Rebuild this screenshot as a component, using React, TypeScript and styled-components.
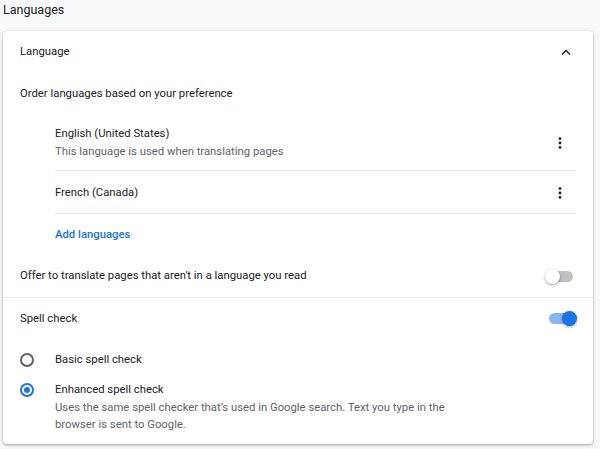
import styled, { createGlobalStyle } from "styled-components";

const GlobalStyle = createGlobalStyle`
  *, *::before, *::after {
    box-sizing: border-box;
  }
  html, body {
    margin: 0;
    padding: 0;
    background: #f8f9fa;
    font-family: Roboto, "Liberation Sans", sans-serif;
    color: #202124;
  }
`;

const Page = styled.div`
  width: 600px;
  height: 449px;
  padding: 0 7px 0 3px;
  overflow: hidden;
`;

const Title = styled.h2`
  margin: 0;
  height: 31px;
  padding-top: 1px;
  font-size: 12.5px;
  font-weight: 400;
  line-height: 18px;
  color: #202124;
`;

const Card = styled.div`
  background: #fff;
  border-radius: 4px;
  box-shadow: 0 1px 2px rgba(60, 64, 67, 0.3), 0 1px 3px 1px rgba(60, 64, 67, 0.15);
  padding-bottom: 10px;
`;

const Row = styled.div<{ $h: number; $divider?: boolean }>`
  display: flex;
  align-items: center;
  justify-content: space-between;
  height: ${(p) => p.$h}px;
  padding: 0 17px;
  font-size: 11.3px;
  line-height: 18px;
  border-bottom: ${(p) => (p.$divider ? "1px solid #e8eaed" : "none")};
`;

const SubList = styled.div`
  margin: 0 17px 0 52px;
`;

const LangItem = styled.div<{ $h: number; $divider?: boolean }>`
  display: flex;
  align-items: center;
  justify-content: space-between;
  height: ${(p) => p.$h}px;
  padding-top: ${(p) => (p.$divider ? 1 : 0)}px;
  font-size: 11.3px;
  line-height: 18px;
  border-bottom: ${(p) => (p.$divider ? "1px solid #e8eaed" : "none")};
`;

const Texts = styled.div`
  display: flex;
  flex-direction: column;
`;

const Secondary = styled.div`
  color: #5f6368;
`;

const LinkText = styled.span`
  color: #1a73e8;
  font-weight: 500;
`;

const IconBox = styled.div<{ $inset?: number }>`
  width: 20px;
  height: 20px;
  display: flex;
  align-items: center;
  justify-content: center;
  margin-right: ${(p) => p.$inset ?? 0}px;
`;

const Toggle = styled.div<{ $on?: boolean }>`
  position: relative;
  width: 27px;
  height: 11px;
  border-radius: 6px;
  background: ${(p) => (p.$on ? "#8ab4f8" : "#bdc1c6")};
  margin-right: ${(p) => (p.$on ? "0" : "3px")};
`;

const Knob = styled.div<{ $on?: boolean }>`
  position: absolute;
  top: -2px;
  left: ${(p) => (p.$on ? "13px" : "-1px")};
  width: 15px;
  height: 15px;
  border-radius: 50%;
  background: ${(p) => (p.$on ? "#1a73e8" : "#fff")};
  box-shadow: 0 1px 3px rgba(0, 0, 0, 0.4);
`;

const RadioRow = styled.div<{ $h?: number }>`
  display: flex;
  align-items: ${(p) => (p.$h ? "center" : "flex-start")};
  height: ${(p) => (p.$h ? `${p.$h}px` : "auto")};
  padding: 0 17px;
  font-size: 11.3px;
  line-height: 17.5px;
`;

const RadioCell = styled.div`
  width: 35px;
  height: 17.5px;
  display: flex;
  align-items: center;
  flex-shrink: 0;
`;

const Radio = styled.div<{ $checked?: boolean }>`
  width: 14px;
  height: 14px;
  border-radius: 50%;
  border: 2px solid ${(p) => (p.$checked ? "#1a73e8" : "#5f6368")};
  display: flex;
  align-items: center;
  justify-content: center;
  &::after {
    content: "";
    display: ${(p) => (p.$checked ? "block" : "none")};
    width: 6px;
    height: 6px;
    border-radius: 50%;
    background: #1a73e8;
  }
`;

const Description = styled.div`
  color: #5f6368;
  width: 392px;
`;

const ChevronUp = () => (
  <svg width="10" height="7" viewBox="0 0 10 7">
    <path d="M1 5.5 L5 1.5 L9 5.5" fill="none" stroke="#202124" strokeWidth="1.5" />
  </svg>
);

const MoreVert = () => (
  <svg width="4" height="12" viewBox="0 0 4 12">
    <circle cx="2" cy="1.6" r="1.4" fill="#202124" />
    <circle cx="2" cy="6" r="1.4" fill="#202124" />
    <circle cx="2" cy="10.4" r="1.4" fill="#202124" />
  </svg>
);

export default function App() {
  return (
    <Page>
      <GlobalStyle />
      <Title>Languages</Title>
      <Card>
        <Row $h={42}>
          <span>Language</span>
          <IconBox $inset={0}>
            <ChevronUp />
          </IconBox>
        </Row>
        <Row $h={41}>
          <span>Order languages based on your preference</span>
        </Row>
        <SubList>
          <LangItem $h={57} $divider>
            <Texts>
              <span>English (United States)</span>
              <Secondary>This language is used when translating pages</Secondary>
            </Texts>
            <IconBox $inset={6}>
              <MoreVert />
            </IconBox>
          </LangItem>
          <LangItem $h={43} $divider>
            <span>French (Canada)</span>
            <IconBox $inset={6}>
              <MoreVert />
            </IconBox>
          </LangItem>
          <LangItem $h={41}>
            <LinkText>Add languages</LinkText>
          </LangItem>
        </SubList>
        <Row $h={43} $divider>
          <span>Offer to translate pages that aren't in a language you read</span>
          <Toggle>
            <Knob />
          </Toggle>
        </Row>
        <Row $h={41}>
          <span>Spell check</span>
          <Toggle $on>
            <Knob $on />
          </Toggle>
        </Row>
        <RadioRow $h={42}>
          <RadioCell>
            <Radio />
          </RadioCell>
          <span>Basic spell check</span>
        </RadioRow>
        <RadioRow>
          <RadioCell>
            <Radio $checked />
          </RadioCell>
          <Texts>
            <span>Enhanced spell check</span>
            <Description>
              Uses the same spell checker that’s used in Google search. Text you type in the
              browser is sent to Google.
            </Description>
          </Texts>
        </RadioRow>
      </Card>
    </Page>
  );
}
